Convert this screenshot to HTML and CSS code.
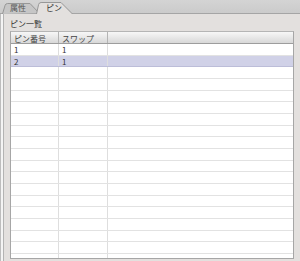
FILE: index.html
```html
<!DOCTYPE html>
<html lang="ja">
<head>
    <meta charset="UTF-8">
    <title>ピン</title>
    <link rel="stylesheet" href="styles.css">
</head>
<body>
    <div class="tabbar">
        <svg class="tab-shapes" width="300" height="14" viewBox="0 0 300 14">
            <path d="M2.5 14 L5 5.5 Q5.6 3.5 7.6 3.5 L30 3.5 L39 13" fill="#c6c6c6" stroke="#979797"/>
            <path d="M36.5 14 L38.6 4.5 Q39.1 2.5 41.1 2.5 L61 2.5 L72.5 14" fill="#e3e0de" stroke="#979797"/>
        </svg>
        <span class="tab tab-prop">属性</span>
        <span class="tab tab-pin">ピン</span>
    </div>

    <div class="panel">
        <div class="caption">ピン一覧</div>
        <div class="grid">
            <div class="row head">
                <div class="cell">ピン番号</div>
                <div class="cell">スワップ</div>
                <div class="cell"></div>
            </div>
            <div id="rows"></div>
        </div>
    </div>

    <script>
        const pins = [
            { no: '1', swap: '1' },
            { no: '2', swap: '1', selected: true }
        ];

        // fill the rest of the list with empty rows
        const rows = document.getElementById('rows');
        let html = '';
        for (let i = 0; i < 19; i++) {
            const pin = pins[i] || { no: '', swap: '' };
            html += `
                <div class="row${pin.selected ? ' selected' : ''}">
                    <div class="cell">${pin.no}</div>
                    <div class="cell">${pin.swap}</div>
                    <div class="cell"></div>
                </div>`;
        }
        rows.innerHTML = html;
    </script>
</body>
</html>
```

FILE: styles.css
```css
body {
    margin: 0;
    width: 300px;
    height: 261px;
    overflow: hidden;
    background: #ececec;
    font-family: "Noto Sans CJK JP", "DejaVu Sans", sans-serif;
    font-size: 8px;
    color: #333;
}
.tabbar {
    position: relative;
    height: 13px;
    width: 300px;
    border-bottom: 1px solid #a5a5a5;
    background: linear-gradient(#d4d4d4, #cbcbcb);
}
.tab-shapes {
    position: absolute;
    left: 0;
    top: 0;
}
.tab {
    position: absolute;
    top: 3px;
    line-height: 10px;
    color: #555;
}
.tab-prop {
    left: 10px;
}
.tab-pin {
    left: 46px;
    color: #333;
}
.panel {
    height: 247px;
    width: 289px;
    border-left: 1px solid #bdbdbd;
    border-right: 2px solid #a9a9a9;
    box-shadow: inset 2px 0 0 #f4f4f4, inset 3px 0 0 #b3b3b3;
    background: #e3e0de;
    padding: 5px 4px 0 9px;
}
.caption {
    height: 12px;
    line-height: 10px;
}
.grid {
    width: 282px;
    height: 226px;
    overflow: hidden;
    border: 1px solid #a6a6a6;
    border-top-color: #b5b5b5;
    background: #fff;
}
.row {
    display: grid;
    grid-template-columns: 48px 49px 1fr;
    height: 11.67px;
    box-sizing: border-box;
    border-bottom: 1px solid #e2e2e2;
}
.cell {
    border-right: 1px solid #dedede;
    padding-left: 3px;
    padding-top: 1px;
    line-height: 9px;
    white-space: nowrap;
}
.cell:last-child {
    border-right: none;
}
.row.head {
    height: 12px;
    background: linear-gradient(#f7f7f7, #d8d8d8);
    border-bottom: 1px solid #9d9d9d;
    color: #444;
}
.row.head .cell {
    border-right-color: #b4b4b4;
    padding-top: 1.5px;
}
.row.head .cell:last-child {
    border-right: none;
}
.row.selected {
    background: #d0d1e7;
    border-bottom-color: #bcbdd8;
}
```
